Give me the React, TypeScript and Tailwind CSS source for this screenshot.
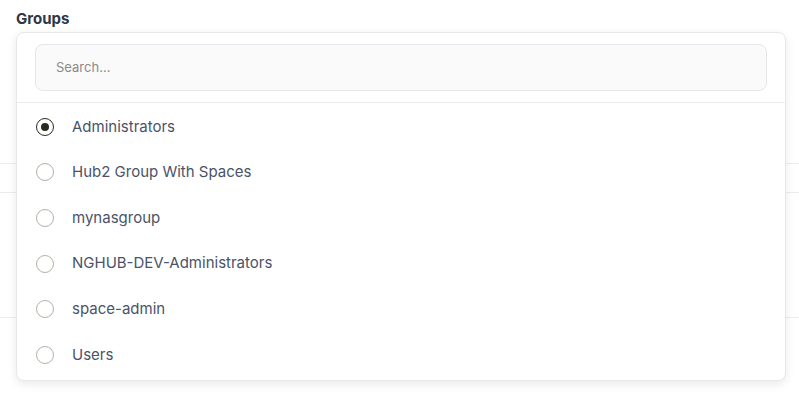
import { useState } from 'react';

const groups = [
	'Administrators',
	'Hub2 Group With Spaces',
	'mynasgroup',
	'NGHUB-DEV-Administrators',
	'space-admin',
	'Users',
];

const App = () => {
	const [selected, setSelected] = useState('Administrators');

	return (
		<div
			className="relative h-[393px] w-[799px] overflow-hidden bg-white"
			style={{ fontFamily: 'Inter, "Noto Sans", sans-serif' }}
		>
			<h2 className="px-4 pt-[9px] text-[15px] font-bold leading-[20px] text-[#2d3748]">Groups</h2>

			{/* page content under the popover */}
			<div className="mt-[134px] border-t border-[#ececef]" />
			<div className="mt-[28px] border-t border-[#ececef]" />
			<div className="mt-[124px] border-t border-[#ececef]" />

			<div className="absolute left-4 top-8 h-[349px] w-[770px] overflow-hidden rounded-lg border border-[#e8e8ec] bg-white shadow-[0_3px_10px_rgba(0,0,0,0.09)]">
				<div className="px-[18px] pb-[11px] pt-[11px]">
					<input
						placeholder="Search..."
						className="h-[47px] w-full rounded-lg border border-[#e6e6e9] bg-[#fafafa] px-5 pb-[2px] text-[13px] text-[#444] outline-none placeholder:text-[#8a8a8a]"
					/>
				</div>
				<div className="border-t border-[#ececef] pt-[1px]">
					{groups.map((g) => {
						const on = g === selected;
						return (
							<button
								key={g}
								type="button"
								onClick={() => setSelected(g)}
								className="flex h-[45.6px] w-full items-center gap-[18px] pl-[19px] text-left"
							>
								<span
									className={
										on
											? 'flex h-[18px] w-[18px] items-center justify-center rounded-full border-[1.5px] border-[#2b2a22]'
											: 'h-[18px] w-[18px] rounded-full border border-[#b3b1a6]'
									}
								>
									{on && <span className="h-[8px] w-[8px] rounded-full bg-[#2b2a1c]" />}
								</span>
								<span className="text-[15px] text-[#4a5368]">{g}</span>
							</button>
						);
					})}
				</div>
			</div>
		</div>
	);
};

export default App;
